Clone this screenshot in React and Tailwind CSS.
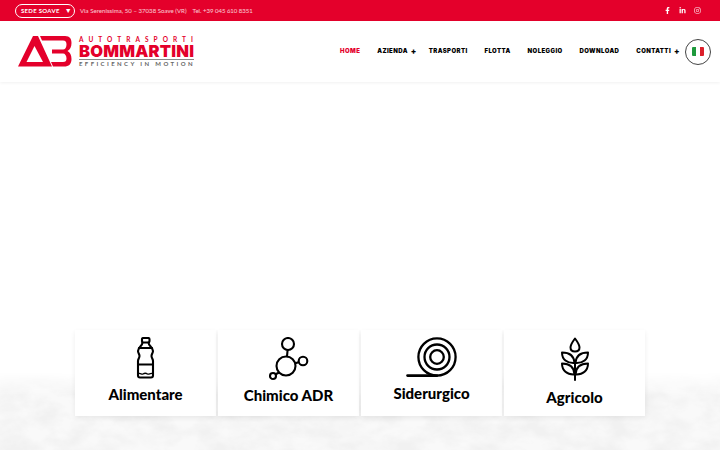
import { FaFacebookF, FaLinkedinIn, FaInstagram } from "react-icons/fa"

const navItems = [
  { label: "HOME", active: true },
  { label: "AZIENDA", plus: true },
  { label: "TRASPORTI" },
  { label: "FLOTTA" },
  { label: "NOLEGGIO" },
  { label: "DOWNLOAD" },
  { label: "CONTATTI", plus: true },
]

function BottleIcon() {
  return (
    <svg width="19" height="42" viewBox="0 0 19 42" fill="none" stroke="#000" strokeWidth="2.1" strokeLinejoin="round" strokeLinecap="round">
      <rect x="6" y="1" width="7.5" height="4.5" rx="1.2" />
      <path d="M6.5 5.5 C6.5 9 2 10 2 14 C2 16 3.5 17 3.5 19 C3.5 21 2 22 2 24 L2 38.5 C2 40 3 40.5 4 40.5 L15 40.5 C16 40.5 17 40 17 38.5 L17 24 C17 22 15.5 21 15.5 19 C15.5 17 17 16 17 14 C17 10 12.5 9 12.5 5.5" />
      <path d="M3 11 L16 11 M2.5 27.5 L16.5 27.5" />
      <path d="M2 37 C4 35 5.5 38 7 37 C8.5 36 10 36 11.5 37 C13 38 15 35 17 37" strokeWidth="1.4" />
    </svg>
  )
}

function MoleculeIcon() {
  return (
    <svg width="40" height="44" viewBox="0 0 40 44" fill="none" stroke="#000" strokeWidth="2.1">
      <circle cx="19" cy="7" r="6" />
      <circle cx="17" cy="29" r="9.5" />
      <circle cx="34" cy="24" r="4.3" />
      <circle cx="4" cy="39" r="3" />
      <path d="M18.6 13 L18 19.5 M26 26.5 L30 25 M10 35.5 L6.3 37.5" />
    </svg>
  )
}

function CoilIcon() {
  return (
    <svg width="51" height="40" viewBox="0 0 51 40" fill="none" stroke="#000" strokeWidth="2.3">
      <circle cx="31" cy="20" r="18.6" />
      <circle cx="31" cy="20" r="12.5" />
      <circle cx="31" cy="20" r="6.8" />
      <path d="M1.5 38.6 L31 38.6" strokeWidth="2.6" strokeLinecap="round" />
    </svg>
  )
}

function WheatIcon() {
  return (
    <svg width="30" height="44" viewBox="0 0 30 44" fill="none" stroke="#000" strokeWidth="2" strokeLinejoin="round" strokeLinecap="round">
      <path d="M15 1.5 C12 5.5 10.5 8 10.5 10.5 C10.5 13 12.5 14.5 15 14.5 C17.5 14.5 19.5 13 19.5 10.5 C19.5 8 18 5.5 15 1.5 Z" />
      <path d="M2 15.5 C8 15.5 14 17.5 14.5 26 C7 26.5 2 22.5 2 15.5 Z" />
      <path d="M28 15.5 C22 15.5 16 17.5 15.5 26 C23 26.5 28 22.5 28 15.5 Z" />
      <path d="M2 26.5 C8 26.5 14 28.5 14.5 37.5 C7 38 2 33.5 2 26.5 Z" />
      <path d="M28 26.5 C22 26.5 16 28.5 15.5 37.5 C23 38 28 33.5 28 26.5 Z" />
      <path d="M15 26 L15 43" />
    </svg>
  )
}

const sectors = [
  { name: "Alimentare", icon: <BottleIcon />, gap: "mt-[7px]" },
  { name: "Chimico ADR", icon: <MoleculeIcon />, gap: "mt-[6px]" },
  { name: "Siderurgico", icon: <CoilIcon />, gap: "mt-[8px]" },
  { name: "Agricolo", icon: <WheatIcon />, gap: "mt-[8px]" },
]

function LogoMark() {
  return (
    <svg width="54" height="31" viewBox="0 0 54 31" fill="#e4002b">
      <path fillRule="evenodd" d="M15 0 L20 0 L34 30.5 L0 30.5 Z M16.5 10 L8.5 26 L25 26 Z" />
      <path d="M22 0 L47 0 C52 0 53.5 3 53.5 7 C53.5 11 52 13.5 49.5 15 C52 16.5 53.5 19 53.5 23 C53.5 28 51 30.5 46 30.5 L35 30.5 L33 26 L45 26 C47.5 26 48.5 25 48.5 22.5 C48.5 19.5 47 17.5 45 17.5 L34 17.5 L34 13.5 L45 13.5 C47 13.5 48.5 11.5 48.5 8.5 C48.5 6 47.5 4.5 45 4.5 L24 4.5 Z" />
    </svg>
  )
}

export default function App() {
  return (
    <div className="relative flex h-[450px] w-[720px] flex-col overflow-hidden bg-white font-['Lato',sans-serif]">
      {/* texture behind the sector cards */}
      <svg className="absolute bottom-0 left-0" width="720" height="78">
        <defs>
          <filter id="grain" x="0" y="0" width="100%" height="100%">
            <feTurbulence type="fractalNoise" baseFrequency="0.035 0.06" numOctaves="5" seed="8" />
            <feColorMatrix values="0 0 0 0 0.88  0 0 0 0 0.88  0 0 0 0 0.88  1.6 1.6 0 0 -1.2" />
          </filter>
          <linearGradient id="fade" x1="0" y1="0" x2="0" y2="1">
            <stop offset="0" stopColor="#000" />
            <stop offset="0.3" stopColor="#fff" />
          </linearGradient>
          <mask id="fadeMask">
            <rect width="720" height="78" fill="url(#fade)" />
          </mask>
        </defs>
        <g mask="url(#fadeMask)">
          <rect width="720" height="78" fill="#f9f9f9" />
          <rect width="720" height="78" filter="url(#grain)" />
        </g>
      </svg>

      {/* top bar */}
      <div className="relative flex h-[21px] items-center bg-[#e4002b] pl-[15px] pr-[19px] text-white">
        <div className="flex h-[14px] w-[60px] items-center gap-[5px] rounded-full border border-white pl-[5px]">
          <span className="text-[6px] font-bold leading-none tracking-[0.3px] whitespace-nowrap">SEDE SOAVE</span>
          <span className="text-[7px] leading-none">▼</span>
        </div>
        <span className="ml-[5px] text-[6px] tracking-[0.05px] text-white/80">Via Serenissima, 50 – 37038 Soave (VR)</span>
        <span className="ml-[6px] text-[6px] text-white/80">Tel. +39 045 610 8351</span>
        <div className="ml-auto flex items-center gap-[8px] text-[7px]">
          <FaFacebookF />
          <FaLinkedinIn />
          <FaInstagram />
        </div>
      </div>

      {/* header */}
      <header className="relative flex h-[61px] items-center justify-between pl-[18px] pr-[9px] shadow-[0_1px_3px_rgba(0,0,0,0.06)]">
        <div className="flex items-center gap-[7px]">
          <LogoMark />
          <div className="flex w-[115px] flex-col whitespace-nowrap">
            <span className="text-[6.5px] font-bold leading-[6px] tracking-[5.05px] text-[#e4002b]">AUTOTRASPORTI</span>
            <span className="mt-[2px] font-['Inter',sans-serif] text-[16.5px] font-black leading-[13px] tracking-[0.2px] text-[#e4002b]">BOMMARTINI</span>
            <span className="mt-[1px] border-t border-[#888] pt-[1px] text-[6px] font-bold leading-[6px] tracking-[2.4px] text-[#666]">EFFICIENCY IN MOTION</span>
          </div>
        </div>

        <nav className="flex items-center font-['Inter',sans-serif] text-[6px] font-black tracking-[0.4px] text-black">
          {navItems.map(({ label, active, plus }) => (
            <div key={label} className="ml-[17px] flex items-center pb-[2px]">
              <span className={active ? "text-[#e4002b]" : ""}>{label}</span>
              {plus && <span className="ml-[3px] -mr-[5px] text-[8px] leading-none">+</span>}
            </div>
          ))}
          <div className="ml-[10px] flex h-[26px] w-[26px] items-center justify-center rounded-full border border-[#444]">
            <div className="flex h-[9px] w-[12px] overflow-hidden rounded-[1px]">
              <div className="flex-1 bg-[#1e9a3c]" />
              <div className="flex-1 bg-white" />
              <div className="flex-1 bg-[#dc1f2b]" />
            </div>
          </div>
        </nav>
      </header>

      {/* sectors */}
      <main className="relative flex flex-1 items-end justify-center pb-[34px]">
        <div className="grid w-[570px] grid-cols-4 gap-[2px]">
          {sectors.map(({ name, icon, gap }) => (
            <div
              key={name}
              className="flex h-[86px] flex-col items-center bg-white pt-[7px] shadow-[0_2px_5px_rgba(0,0,0,0.07)]"
            >
              {icon}
              <p className={`${gap} text-[15px] font-black leading-[16px] text-black`}>{name}</p>
            </div>
          ))}
        </div>
      </main>
    </div>
  )
}
